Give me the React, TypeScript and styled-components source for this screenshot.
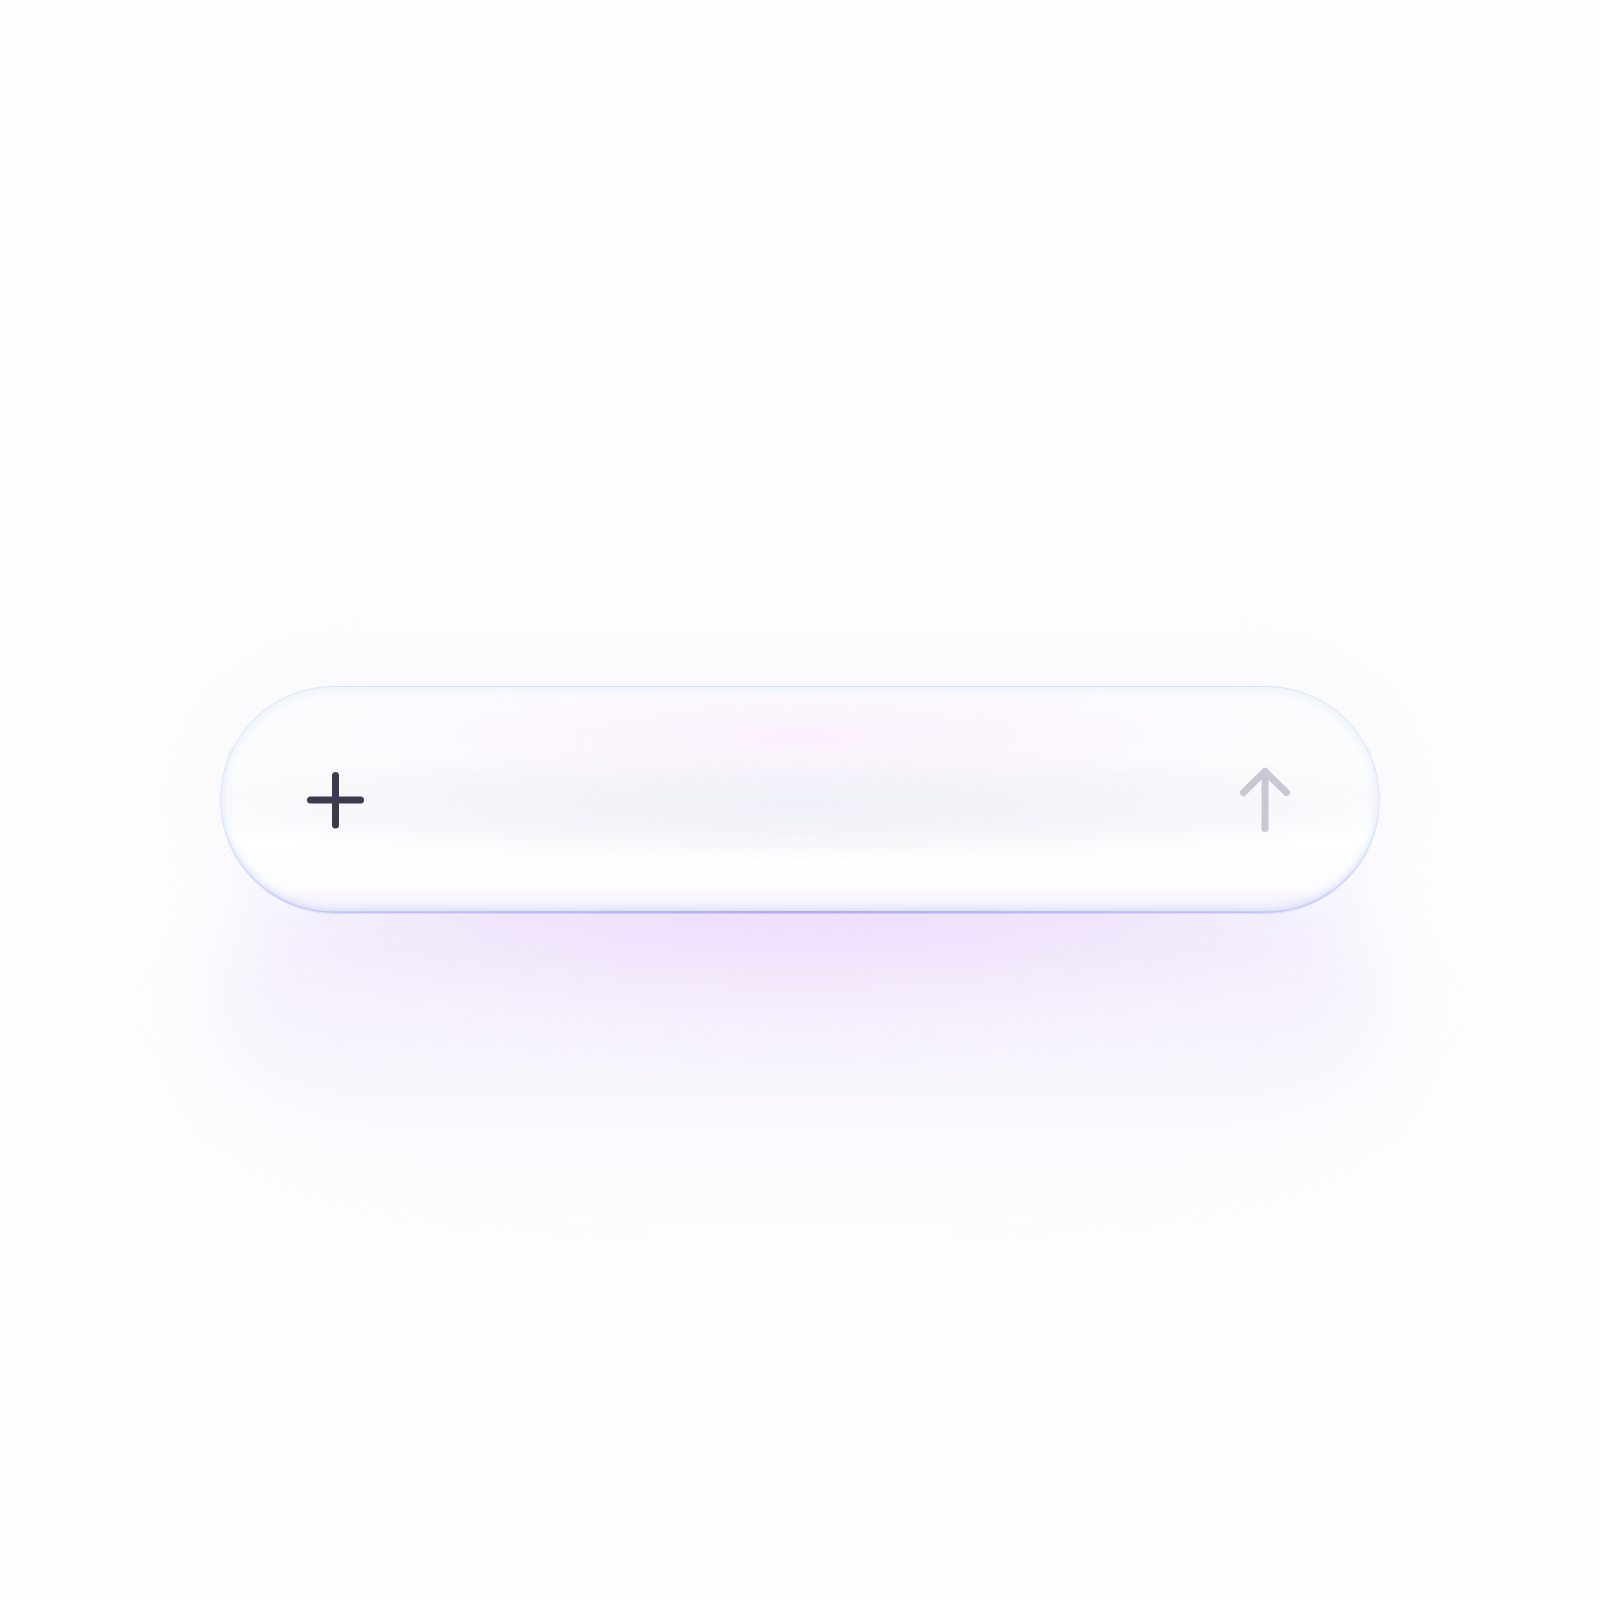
import React from 'react';
import styled, { createGlobalStyle } from 'styled-components';

const GlobalStyle = createGlobalStyle`
  html, body {
    margin: 0;
    padding: 0;
    background: #fdfdfe;
    font-family: "Inter", "Liberation Sans", sans-serif;
  }
`;

const Page = styled.main`
  min-height: 1600px;
  display: flex;
  align-items: center;
  justify-content: center;
  isolation: isolate;
`;

const Composer = styled.div`
  position: relative;
  box-sizing: border-box;
  width: 1160px;
  height: 228px;
  border-radius: 114px;
  padding: 0 67px;
  display: flex;
  align-items: center;
  justify-content: space-between;
  border: 1.5px solid rgba(208, 224, 244, 0.75);
  background:
    linear-gradient(to right, rgba(190, 205, 246, 0) 6%, rgba(170, 136, 248, 1) 50%, rgba(190, 205, 246, 0) 94%) bottom / 100% 3px no-repeat border-box,
    radial-gradient(ellipse 40% 26% at 50% 22%, rgba(251, 238, 252, 0.8), rgba(251, 238, 252, 0) 100%),
    radial-gradient(ellipse 58% 26% at 50% 52%, rgba(240, 240, 248, 1) 0%, rgba(241, 241, 248, 0.85) 45%, rgba(241, 241, 248, 0) 100%),
    linear-gradient(to bottom, #fbfbfe 0%, #fcfcfe 35%, #ffffff 68%, #fdfcff 88%, #f3eefd 100%);
  box-shadow:
    inset 0 -2px 1px -0.5px rgba(176, 150, 246, 0.4),
    inset 0 -7px 8px -4px rgba(186, 204, 246, 0.45),
    inset 0 0 12px rgba(210, 230, 248, 0.6),
    0 0 70px 10px rgba(232, 232, 248, 0.2);

  &::after {
    content: '';
    position: absolute;
    z-index: -1;
    left: 0;
    right: 0;
    top: 58%;
    height: 400px;
    border-radius: 45%;
    background:
      radial-gradient(ellipse 42% 40% at 50% 18%, rgba(234, 198, 250, 0.4), rgba(234, 198, 250, 0) 100%),
      linear-gradient(
        to bottom,
        rgba(234, 206, 250, 0.6) 0%,
        rgba(230, 214, 251, 0.46) 30%,
        rgba(236, 228, 252, 0.22) 65%,
        rgba(240, 236, 252, 0) 100%
      );
    filter: blur(48px);
  }
`;

const IconButton = styled.button<{ $muted?: boolean }>`
  width: 96px;
  height: 96px;
  padding: 0;
  border: none;
  background: transparent;
  display: flex;
  align-items: center;
  justify-content: center;
  color: ${({ $muted }) => ($muted ? '#c9c7d4' : '#3c3a4d')};
  cursor: pointer;

  svg {
    display: block;
  }
`;

const PlusIcon = () => (
  <svg width="96" height="96" viewBox="0 0 96 96" fill="none" stroke="currentColor" strokeWidth="7" strokeLinecap="round">
    <path d="M22.5 48H72.5" />
    <path d="M47.5 23.5V73" />
  </svg>
);

const ArrowUpIcon = () => (
  <svg width="96" height="96" viewBox="0 0 96 96" fill="none" stroke="currentColor" strokeWidth="7" strokeLinecap="round" strokeLinejoin="round">
    <path d="M27.5 40.5L49 19.5L70.5 40.5" />
    <path d="M49 19.5V76.5" />
  </svg>
);

const App: React.FC = () => (
  <Page>
    <GlobalStyle />
    <Composer>
      <IconButton aria-label="Add attachment">
        <PlusIcon />
      </IconButton>
      <IconButton $muted aria-label="Send message">
        <ArrowUpIcon />
      </IconButton>
    </Composer>
  </Page>
);

export default App;
